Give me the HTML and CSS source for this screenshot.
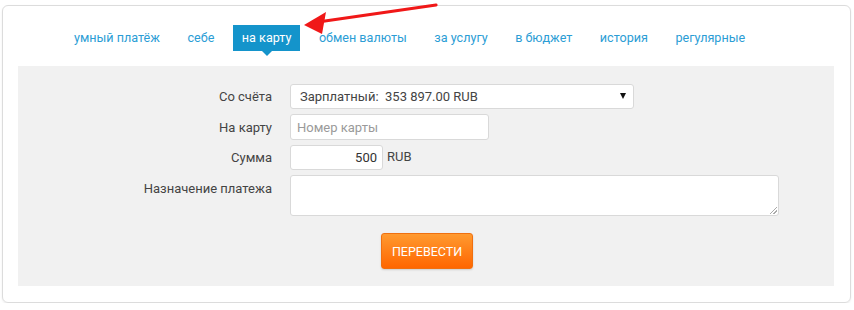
FILE: index.html
```html
<!DOCTYPE html>
<html lang="ru">
<head>
<meta charset="utf-8">
<link rel="stylesheet" href="styles.css">
</head>
<body>
<div class="card">
  <nav class="tabs">
    <a class="tab">умный платёж</a>
    <a class="tab">себе</a>
    <a class="tab active">на карту</a>
    <a class="tab">обмен валюты</a>
    <a class="tab">за услугу</a>
    <a class="tab">в бюджет</a>
    <a class="tab">история</a>
    <a class="tab">регулярные</a>
  </nav>
  <div class="panel">
    <div class="row">
      <div class="label">Со счёта</div>
      <div class="select"><span>Зарплатный:&nbsp;&nbsp;353 897.00 RUB</span><span class="caret"></span></div>
    </div>
    <div class="row">
      <div class="label">На карту</div>
      <div class="input card-input placeholder">Номер карты</div>
    </div>
    <div class="row">
      <div class="label">Сумма</div>
      <div class="input sum-input">500</div>
      <div class="unit">RUB</div>
    </div>
    <div class="row top">
      <div class="label">Назначение платежа</div>
      <div class="textarea"><span class="grip"></span></div>
    </div>
    <div class="actions">
      <button class="btn">ПЕРЕВЕСТИ</button>
    </div>
  </div>
</div>
<svg class="arrow" width="854" height="60" viewBox="0 0 854 60">
  <line x1="436" y1="5" x2="318" y2="22" stroke="#f01818" stroke-width="3.2" stroke-linecap="round"/>
  <polygon points="304,25 326,12 322,34" fill="#f01818"/>
</svg>
</body>
</html>
```
FILE: styles.css
```css
* { box-sizing: border-box; }
body {
  margin: 0;
  background: #fff;
  font-family: Roboto, "Noto Sans", "Liberation Sans", sans-serif;
  font-size: 13px;
  color: #333;
}
.card {
  margin: 5px 3px 0 2px;
  height: 298px;
  border: 1px solid #dcdcdc;
  border-radius: 6px;
  box-shadow: 0 1px 2px rgba(0,0,0,0.08);
  padding: 19px 16px 16px 15px;
  display: flex;
  flex-direction: column;
}
.tabs {
  display: flex;
  gap: 9.5px;
  padding-left: 47px;
  height: 27px;
  margin-bottom: 15px;
}
.tab {
  position: relative;
  display: flex;
  align-items: center;
  padding: 0 9px 1px 9px;
  color: #2b9dd5;
  font-size: 12.6px;
  white-space: nowrap;
}
.tab.active {
  background: #1494cb;
  color: #fff;
  padding-right: 9px;
}
.tab.active::after {
  content: "";
  position: absolute;
  left: 50%;
  bottom: -5px;
  margin-left: -5px;
  border-left: 5px solid transparent;
  border-right: 5px solid transparent;
  border-top: 5px solid #1494cb;
}
.panel {
  flex: 1;
  background: #f1f1f1;
  padding: 18px 0 17px 0;
  display: flex;
  flex-direction: column;
  gap: 5px;
}
.row {
  display: flex;
  align-items: center;
}
.row.top { align-items: flex-start; }
.label {
  width: 254px;
  text-align: right;
  margin-right: 18px;
  color: #444;
  font-size: 13px;
}
.row.top .label { padding-top: 6px; }
.select, .input, .textarea {
  background: #fff;
  border: 1px solid #d9d9d9;
  border-radius: 3px;
}
.select {
  width: 344px;
  height: 25px;
  display: flex;
  align-items: center;
  justify-content: space-between;
  padding: 0 7px 0 9px;
  color: #444;
}
.caret {
  width: 0; height: 0;
  border-left: 3.5px solid transparent;
  border-right: 3.5px solid transparent;
  border-top: 6px solid #111;
  margin-top: -1px;
}
.input {
  height: 26px;
  display: flex;
  align-items: center;
  padding: 0 6px;
  color: #333;
}
.card-input { width: 199px; }
.placeholder { color: #9a9a9a; }
.sum-input {
  width: 93px;
  height: 25px;
  justify-content: flex-end;
  padding-right: 5px;
}
.unit {
  margin-left: 4px;
  margin-top: -3px;
  color: #444;
}
.textarea {
  width: 489px;
  height: 41px;
  position: relative;
}
.grip {
  position: absolute;
  right: 1px;
  bottom: 1px;
  width: 7px;
  height: 7px;
  background: linear-gradient(135deg, transparent 45%, #aaa 45%, #aaa 55%, transparent 55%, transparent 70%, #aaa 70%, #aaa 80%, transparent 80%);
}
.actions {
  display: flex;
  justify-content: center;
  padding-left: 2px;
  margin-top: 12px;
}
.btn {
  width: 92px;
  height: 36px;
  border: 1px solid #f07010;
  border-radius: 3px;
  background: linear-gradient(#ff9a30, #ff6600);
  color: #fff;
  font-family: Roboto, "Liberation Sans", sans-serif;
  font-size: 12.5px;
  box-shadow: 0 1px 2px rgba(0,0,0,0.15);
  padding: 0;
}
.arrow {
  position: absolute;
  left: 0;
  top: 0;
  pointer-events: none;
}
```
